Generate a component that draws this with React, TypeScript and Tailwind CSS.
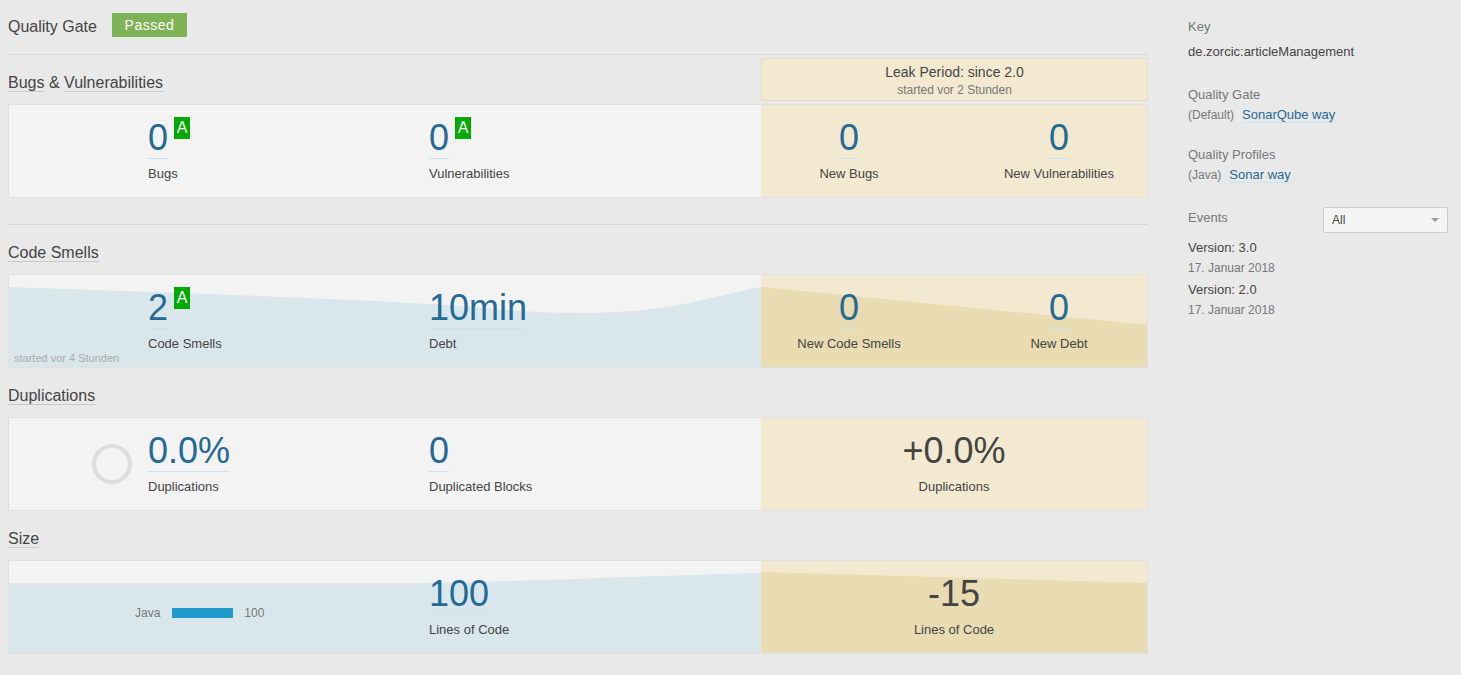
import { ReactNode } from "react";

interface MeasureProp {
  value: string;
  label: string;
  rating?: string;
  plain?: boolean;
  center?: boolean;
}

const Measure = ({ value, label, rating, plain, center }: MeasureProp) => (
  <div className={`flex flex-col ${center ? "items-center" : "items-start"}`}>
    <div className="flex items-start">
      <span
        className={`inline-block border-b text-[36px] leading-[40px] ${
          plain ? "border-transparent text-[#444]" : "border-[#cae3f2] text-[#236a97]"
        }`}
      >
        {value}
      </span>
      {rating && (
        <span className="ml-[6px] -mt-[1px] h-[22px] w-[16px] bg-[#00aa00] text-center text-[16px] leading-[22px] text-white">
          {rating}
        </span>
      )}
    </div>
    <div className="mt-[7px] text-[13px] leading-[16px] text-[#444]">{label}</div>
  </div>
);

const SectionTitle = ({ children }: { children: ReactNode }) => (
  <h2 className="mt-[19px] text-[16px] leading-[18px] text-[#444]">{children}</h2>
);

const Link = ({ children }: { children: ReactNode }) => (
  <span className="border-b border-[#cae3f2] text-[#236a97]">{children}</span>
);

const Card = ({
  left,
  leak,
  leftChart,
  leakChart
}: {
  left: ReactNode;
  leak: ReactNode;
  leftChart?: ReactNode;
  leakChart?: ReactNode;
}) => (
  <div className="mt-[3px] flex h-[94px] border border-[#e0e0e0]">
    <div className="relative w-[752px] bg-[#f3f3f3]">
      {leftChart}
      <div className="relative flex h-full pt-[13px]">{left}</div>
    </div>
    <div className="relative flex-1 bg-[#f3e9d0]">
      {leakChart}
      <div className="relative flex h-full pt-[13px]">{leak}</div>
    </div>
  </div>
);

const AreaChart = ({ d, fill }: { d: string; fill: string }) => (
  <svg
    className="absolute inset-0 h-full w-full"
    viewBox="0 0 752 92"
    preserveAspectRatio="none"
  >
    <path d={d} fill={fill} />
  </svg>
);

const LeakChart = ({ d }: { d: string }) => (
  <svg
    className="absolute inset-0 h-full w-full"
    viewBox="0 0 386 92"
    preserveAspectRatio="none"
  >
    <path d={d} fill="#e9dbb2" />
  </svg>
);

export default function App() {
  return (
    <div className="flex min-h-screen bg-[#e9e9e9] px-[8px] font-['Liberation_Sans',Arial,sans-serif] text-[#444]">
      <main className="w-[1140px]">
        <div className="mt-[13px] flex h-[24px] items-center">
          <span className="pt-[3px] text-[16px] leading-[18px]">Quality Gate</span>
          <span className="ml-[15px] h-[24px] w-[75px] bg-[#7db354] text-center text-[14px] leading-[24px] tracking-[0.5px] text-white">
            Passed
          </span>
        </div>

        {/* Bugs & Vulnerabilities */}
        <section className="mt-[17px] border-t border-[#d6d6d6]">
          <div className="flex h-[46px] items-start justify-between">
            <SectionTitle>
              <span className="border-b border-[#c8c8c8]">Bugs</span> &amp;{" "}
              <span className="border-b border-[#c8c8c8]">Vulnerabilities</span>
            </SectionTitle>
            <div className="mt-[3px] h-[43px] w-[387px] border border-[#e2dccb] bg-[#f3e9d0] pt-[5px] text-center">
              <div className="text-[14px] leading-[16px] text-[#444]">Leak Period: since 2.0</div>
              <div className="mt-[3px] text-[12px] leading-[14px] text-[#777]">started vor 2 Stunden</div>
            </div>
          </div>
          <Card
            left={
              <>
                <div className="w-[139px]" />
                <div className="w-[281px]">
                  <Measure value="0" label="Bugs" rating="A" />
                </div>
                <Measure value="0" label="Vulnerabilities" rating="A" />
              </>
            }
            leak={
              <>
                <div className="ml-[28px] w-[120px]">
                  <Measure value="0" label="New Bugs" center />
                </div>
                <div className="ml-[90px] w-[120px]">
                  <Measure value="0" label="New Vulnerabilities" center />
                </div>
              </>
            }
          />
        </section>

        {/* Code Smells */}
        <section className="mt-[26px] border-t border-[#d6d6d6]">
          <div className="flex h-[46px] items-start">
            <SectionTitle>
              <span className="border-b border-[#c8c8c8]">Code Smells</span>
            </SectionTitle>
          </div>
          <Card
            leftChart={
              <>
                <AreaChart
                  d="M0 12 C 120 16, 300 22, 420 29 C 480 33, 520 38, 570 38 C 620 38, 650 34, 690 26 C 715 20, 735 15, 752 12 L 752 92 L 0 92 Z"
                  fill="#d9e7ec"
                />
                <span className="absolute bottom-[2px] left-[5px] text-[11px] leading-[14px] text-[#aaa]">
                  started vor 4 Stunden
                </span>
              </>
            }
            leakChart={<LeakChart d="M0 12 L 386 50 L 386 92 L 0 92 Z" />}
            left={
              <>
                <div className="w-[139px]" />
                <div className="w-[281px]">
                  <Measure value="2" label="Code Smells" rating="A" />
                </div>
                <Measure value="10min" label="Debt" />
              </>
            }
            leak={
              <>
                <div className="ml-[28px] w-[120px]">
                  <Measure value="0" label="New Code Smells" center />
                </div>
                <div className="ml-[90px] w-[120px]">
                  <Measure value="0" label="New Debt" center />
                </div>
              </>
            }
          />
        </section>

        {/* Duplications */}
        <section>
          <div className="flex h-[46px] items-start">
            <SectionTitle>
              <span className="border-b border-[#c8c8c8]">Duplications</span>
            </SectionTitle>
          </div>
          <Card
            left={
              <>
                <div className="-mt-[13px] flex h-[92px] w-[139px] items-center justify-end pr-[14px]">
                  <svg width="44" height="44" viewBox="0 0 44 44">
                    <circle cx="22" cy="22" r="18" fill="none" stroke="#dddddd" strokeWidth="4" />
                  </svg>
                </div>
                <div className="w-[281px]">
                  <Measure value="0.0%" label="Duplications" />
                </div>
                <Measure value="0" label="Duplicated Blocks" />
              </>
            }
            leak={
              <div className="w-full">
                <Measure value="+0.0%" label="Duplications" plain center />
              </div>
            }
          />
        </section>

        {/* Size */}
        <section>
          <div className="flex h-[46px] items-start">
            <SectionTitle>
              <span className="border-b border-[#c8c8c8]">Size</span>
            </SectionTitle>
          </div>
          <Card
            leftChart={
              <AreaChart
                d="M0 22 L 420 22 C 500 21, 600 16, 752 12 L 752 92 L 0 92 Z"
                fill="#d9e7ec"
              />
            }
            leakChart={<LeakChart d="M0 11 L 386 22 L 386 92 L 0 92 Z" />}
            left={
              <>
                <div className="-mt-[13px] flex h-[92px] w-[420px] items-center pl-[126px] pt-[12px]">
                  <span className="text-[12px] leading-[14px] text-[#777]">Java</span>
                  <span className="ml-[12px] h-[10px] w-[61px] bg-[#1f9bcb]" />
                  <span className="ml-[11px] text-[12px] leading-[14px] text-[#777]">100</span>
                </div>
                <Measure value="100" label="Lines of Code" />
              </>
            }
            leak={
              <div className="w-full">
                <Measure value="-15" label="Lines of Code" plain center />
              </div>
            }
          />
        </section>
      </main>

      <aside className="ml-[40px] w-[260px] pt-[19px] text-[13px]">
        <div className="leading-[16px] text-[#777]">Key</div>
        <div className="mt-[9px] leading-[16px] text-[#444]">de.zorcic:articleManagement</div>

        <div className="mt-[27px] leading-[16px] text-[#777]">Quality Gate</div>
        <div className="mt-[4px] leading-[16px]">
          <span className="mr-[8px] text-[12px] text-[#777]">(Default)</span>
          <Link>SonarQube way</Link>
        </div>

        <div className="mt-[24px] leading-[16px] text-[#777]">Quality Profiles</div>
        <div className="mt-[4px] leading-[16px]">
          <span className="mr-[8px] text-[12px] text-[#777]">(Java)</span>
          <Link>Sonar way</Link>
        </div>

        <div className="mt-[24px] flex items-start justify-between">
          <span className="mt-[3px] leading-[16px] text-[#777]">Events</span>
          <div className="flex h-[26px] w-[125px] items-center justify-between rounded-[2px] border border-[#cccccc] bg-[#f5f5f5] pl-[8px] pr-[8px]">
            <span className="text-[12px] text-[#444]">All</span>
            <span className="h-0 w-0 border-x-[4px] border-t-[4px] border-x-transparent border-t-[#999]" />
          </div>
        </div>

        <div className="mt-[7px] leading-[16px] text-[#444]">Version: 3.0</div>
        <div className="mt-[4px] text-[12px] leading-[16px] text-[#777]">17. Januar 2018</div>
        <div className="mt-[6px] leading-[16px] text-[#444]">Version: 2.0</div>
        <div className="mt-[4px] text-[12px] leading-[16px] text-[#777]">17. Januar 2018</div>
      </aside>
    </div>
  );
}
